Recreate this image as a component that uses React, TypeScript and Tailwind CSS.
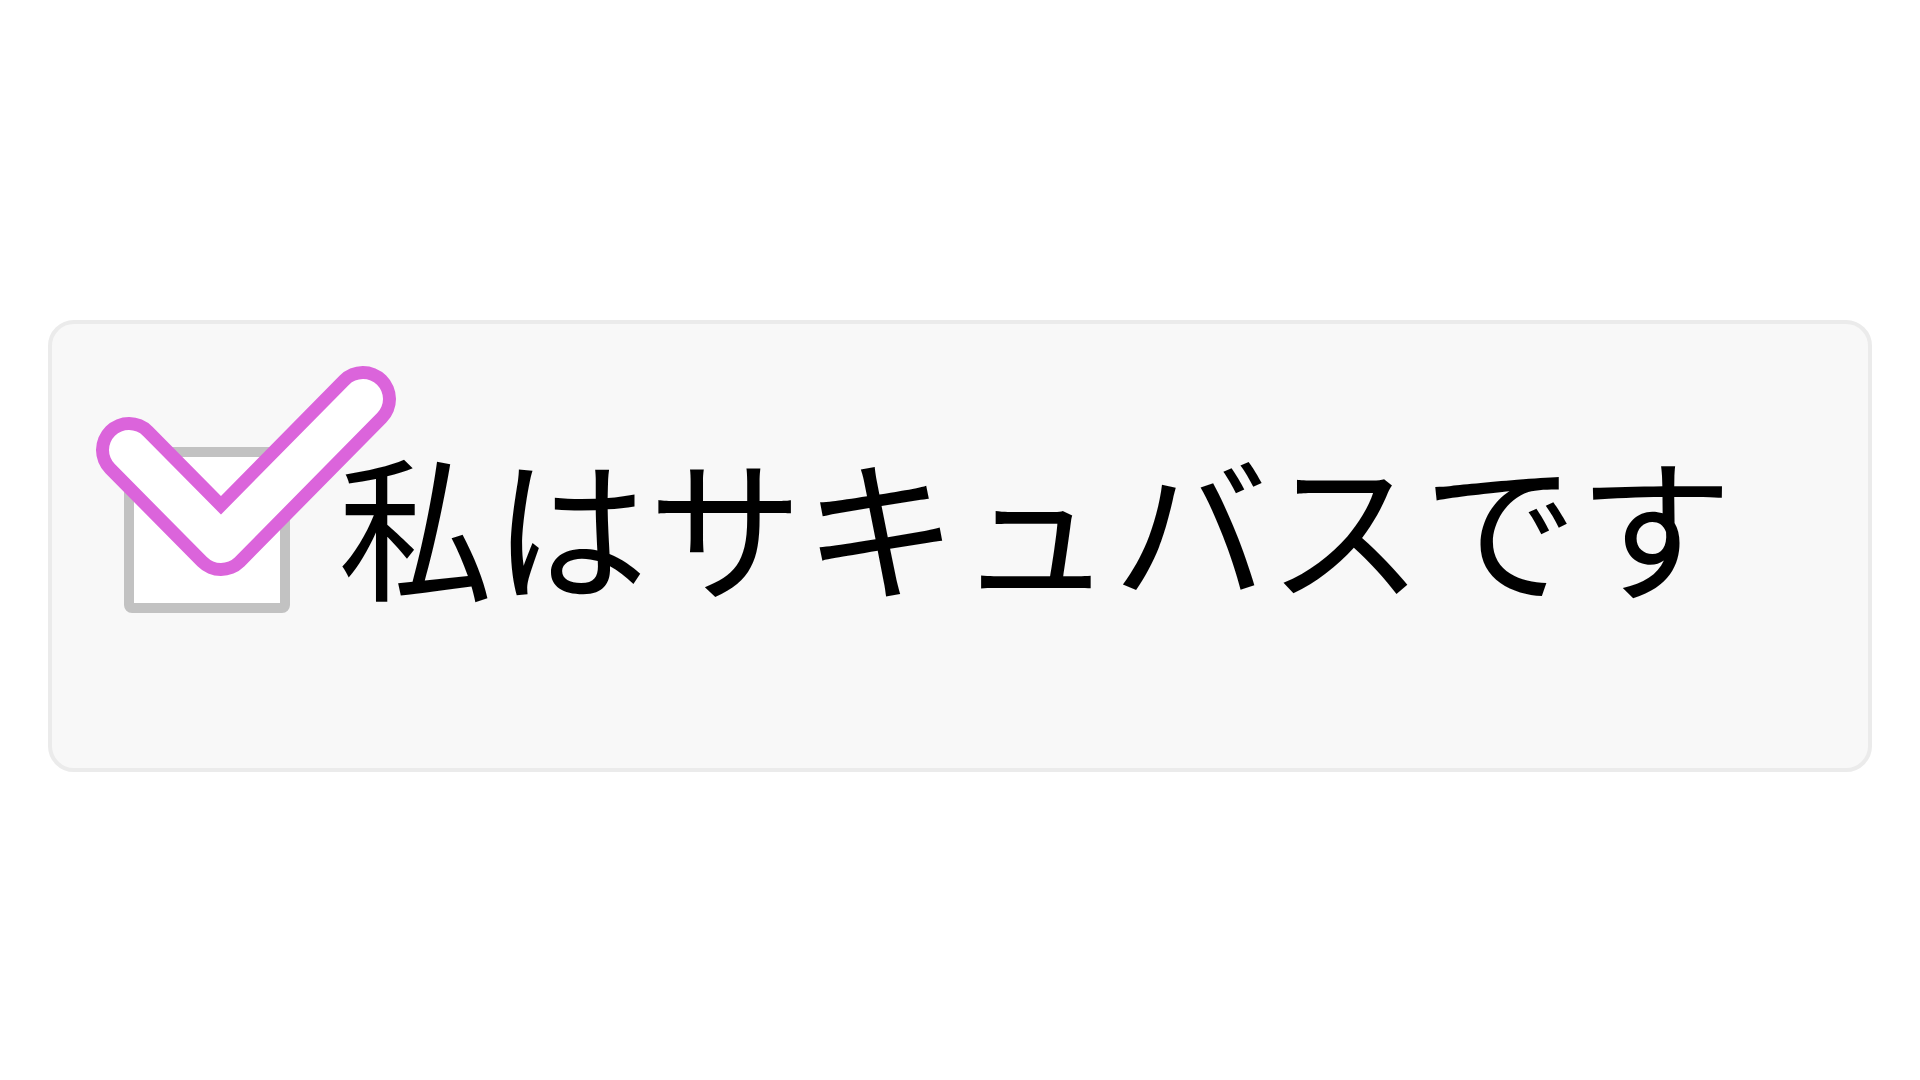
export default function App() {
  return (
    <div className="min-h-screen w-full bg-white px-12 pt-[320px]">
      {/* Card */}
      <div className="h-[452px] rounded-[26px] border-4 border-[#ebebeb] bg-[#f8f8f8] pl-[72px] pt-[123px]">
        <div className="flex items-center">
          {/* Checkbox with oversized check mark */}
          <div className="relative h-[166px] w-[166px] shrink-0">
            <div className="h-full w-full rounded-[8px] border-[10px] border-[#c2c2c2] bg-white" />
            <svg
              className="absolute left-[-40px] top-[-100px]"
              width="340"
              height="250"
              viewBox="0 0 340 250"
              fill="none"
            >
              <path
                d="M45 103 L137 196 L279 52"
                stroke="#db64db"
                strokeWidth="66"
                strokeLinecap="round"
                strokeLinejoin="round"
              />
              <path
                d="M45 103 L137 196 L279 52"
                stroke="#ffffff"
                strokeWidth="40"
                strokeLinecap="round"
                strokeLinejoin="round"
              />
            </svg>
          </div>
          <p className="ml-[48px] -mt-[18px] font-['Noto_Sans_CJK_JP','Noto_Sans',sans-serif] text-[155px] font-normal leading-none text-black">
            私はサキュバスです
          </p>
        </div>
      </div>
    </div>
  );
}
